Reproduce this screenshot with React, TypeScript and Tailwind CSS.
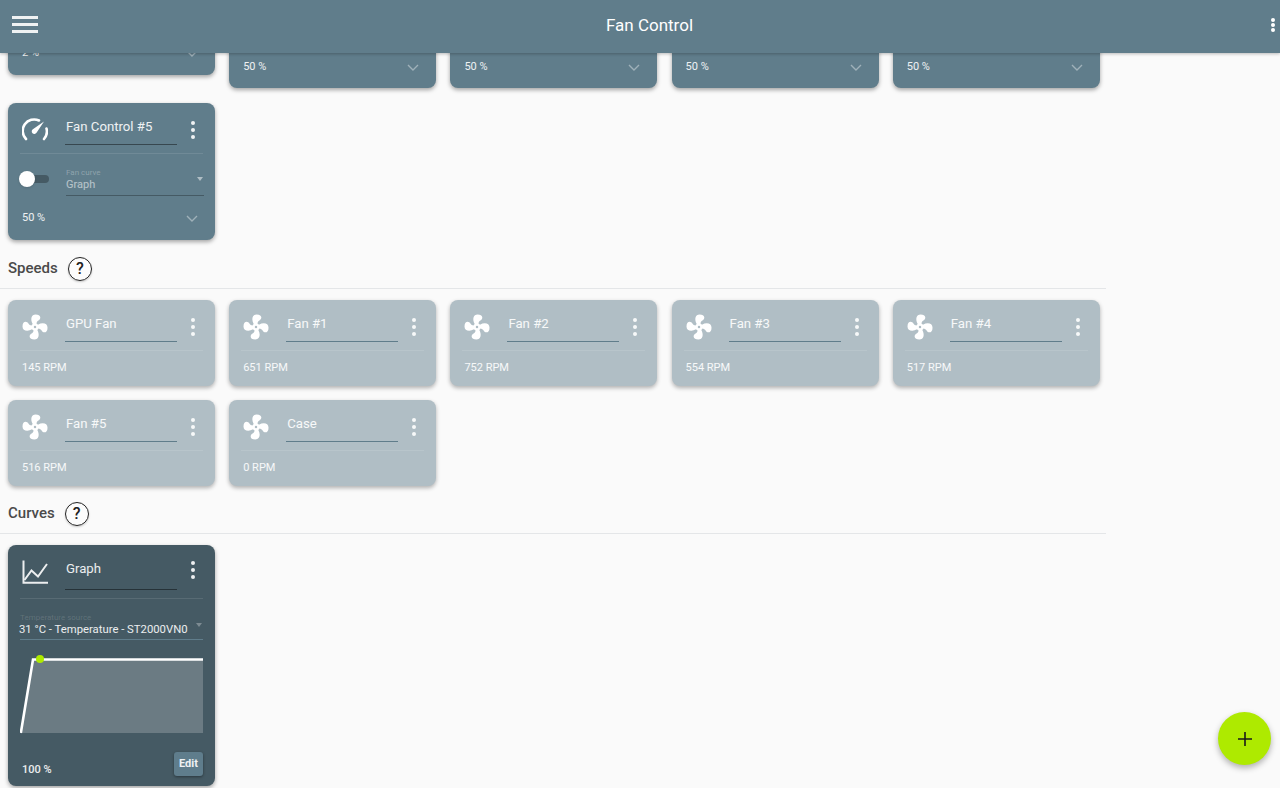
const fanPath =
  "M12,11A1,1 0 0,0 11,12A1,1 0 0,0 12,13A1,1 0 0,0 13,12A1,1 0 0,0 12,11M12.5,2C17,2 17.11,5.57 14.75,6.75C13.76,7.24 13.32,8.29 13.13,9.22C13.61,9.42 14.03,9.73 14.35,10.13C18.05,8.13 22.03,8.92 22.03,12.5C22.03,17 18.46,17.1 17.28,14.73C16.78,13.74 15.72,13.3 14.79,13.11C14.59,13.59 14.28,14 13.88,14.34C15.87,18.03 15.08,22 11.5,22C7,22 6.91,18.42 9.27,17.24C10.25,16.75 10.69,15.71 10.89,14.79C10.4,14.59 9.97,14.27 9.65,13.87C5.96,15.85 2,15.07 2,11.5C2,7 5.56,6.89 6.74,9.26C7.24,10.25 8.29,10.68 9.22,10.87C9.41,10.39 9.73,9.97 10.14,9.65C8.15,5.96 8.94,2 12.5,2Z";

function FanIcon() {
  return (
    <svg viewBox="0 0 24 24" className="w-[30px] h-[30px] text-white" fill="currentColor" fillRule="evenodd">
      <path d={fanPath} />
    </svg>
  );
}

function GaugeIcon() {
  return (
    <svg viewBox="0 0 26 24" className="w-[26px] h-[24px] text-white" fill="none" stroke="currentColor">
      <path d="M4 21A11.5 11.5 0 0 1 17 2.5" strokeWidth="2.6" strokeLinecap="round" />
      <path d="M24.5 10.5A11.5 11.5 0 0 1 22 21" strokeWidth="2.6" strokeLinecap="round" />
      <path d="M22 3.5L14.5 14.8a2.6 2.6 0 1 1-3.6-3.6z" fill="currentColor" stroke="none" />
    </svg>
  );
}

function ChartIcon() {
  return (
    <svg viewBox="0 0 26 24" className="w-[26px] h-[24px] text-white opacity-90" fill="none" stroke="currentColor" strokeWidth="2">
      <path d="M1.5 0.5V22.8H26" />
      <path d="M2.5 20L9.5 10.5L16 16.5L25 4" />
    </svg>
  );
}

function Dots() {
  return (
    <div className="flex flex-col gap-[3px] items-center w-[4px]">
      <div className="w-[4px] h-[4px] rounded-full bg-white opacity-90" />
      <div className="w-[4px] h-[4px] rounded-full bg-white opacity-90" />
      <div className="w-[4px] h-[4px] rounded-full bg-white opacity-90" />
    </div>
  );
}

function CardHead({
  icon,
  name,
  line,
  tall,
  dotsTop = "mt-[18px]",
}: {
  icon: React.ReactNode;
  name: string;
  line: string;
  tall?: boolean;
  dotsTop?: string;
}) {
  return (
    <div className={`flex mx-3 border-b border-white/10 ${tall ? "h-[54px]" : "h-[51px]"}`}>
      <div className="w-[30px] h-[40px] mt-[7px] flex items-center justify-center">{icon}</div>
      <div className={`ml-[15px] w-[112px] border-b pl-[1px] pt-[16px] text-[13.2px] leading-4 text-white/90 ${line} ${tall ? "h-[45px]" : "h-[42px]"}`}>
        {name}
      </div>
      <div className={`ml-[14px] ${dotsTop}`}>
        <Dots />
      </div>
    </div>
  );
}

function Chevron() {
  return (
    <svg viewBox="0 0 12 7" className="w-[12px] h-[7px] text-white/40" fill="none" stroke="currentColor" strokeWidth="1.4">
      <path d="M1 1l5 5 5-5" />
    </svg>
  );
}

function CardFooter({ value, tall }: { value: string; tall?: boolean }) {
  return (
    <div className={`mt-auto flex items-center justify-between pl-[14px] pr-[17px] ${tall ? "h-[42px]" : "h-[44px]"}`}>
      <span className="text-[11px] text-white/90">{value}</span>
      <Chevron />
    </div>
  );
}

// the upper part of these sits behind the app bar, only the footer shows
function ScrolledCard({ value, tall }: { value: string; tall?: boolean }) {
  return (
    <div className={`w-[207px] rounded-lg bg-[#607d8b] shadow-[0_2px_4px_rgba(0,0,0,0.35)] flex flex-col ${tall ? "h-[150px]" : "h-[137px]"}`}>
      <CardFooter value={value} tall={tall} />
    </div>
  );
}

function ControlCard({ name, value, curve = "Graph" }: { name: string; value: string; curve?: string }) {
  return (
    <div className="w-[207px] h-[137px] rounded-lg bg-[#607d8b] shadow-[0_2px_4px_rgba(0,0,0,0.35)] flex flex-col">
      <CardHead icon={<GaugeIcon />} name={name} line="border-[#37474f]" />
      <div className="flex mt-[14px] pl-3 pr-[11px]">
        <div className="relative w-[30px] h-[28px]">
          <div className="absolute left-[4px] top-[7px] w-[25px] h-[8px] rounded-full bg-[#455a64]" />
          <div className="absolute -left-[1px] top-[3px] w-[16px] h-[16px] rounded-full bg-white shadow" />
        </div>
        <div className="relative ml-[16px] flex-1 h-[28px] border-b border-[#455a64]">
          <div className="text-[8px] leading-[10px] text-white/30">Fan curve</div>
          <div className="text-[11px] leading-[14px] text-white/55">{curve}</div>
          <div className="absolute right-[1px] top-[9px] w-0 h-0 border-x-[3.5px] border-x-transparent border-t-[4px] border-t-white/50" />
        </div>
      </div>
      <CardFooter value={value} />
    </div>
  );
}

function SpeedCard({ name, rpm }: { name: string; rpm: string }) {
  return (
    <div className="w-[207px] h-[86px] rounded-lg bg-[#b0bec5] shadow-[0_2px_4px_rgba(0,0,0,0.3)]">
      <CardHead icon={<FanIcon />} name={name} line="border-[#607d8b]" />
      <div className="pl-[14px] pt-[10px] text-[11px] leading-[14px] text-white/90">{rpm}</div>
    </div>
  );
}

function SectionTitle({ title }: { title: string }) {
  return (
    <div className="flex items-center w-[1106px] h-[39px] -ml-2 pl-2 pb-[1px] border-b border-[#e4e6e8]">
      <span className="text-[15px] font-medium text-[#4a4a4a]">{title}</span>
      <div className="ml-[10px] w-[24px] h-[24px] rounded-full border-[1.5px] border-[#222] bg-white/40 shadow-[0_1px_2px_rgba(0,0,0,0.2)] flex items-center justify-center text-[16px] font-medium text-[#222]">
        ?
      </div>
    </div>
  );
}

function CurveCard() {
  return (
    <div className="w-[207px] h-[241px] rounded-lg bg-[#455a64] shadow-[0_2px_4px_rgba(0,0,0,0.35)] flex flex-col">
      <CardHead icon={<ChartIcon />} name="Graph" line="border-[#263238]" tall dotsTop="mt-[16px]" />
      <div className="relative mx-3 mt-[13px] h-[28px] border-b border-[#607d8b] whitespace-nowrap">
        <div className="text-[8px] leading-[11px] text-white/15">Temperature source</div>
        <div className="-ml-[1px] text-[11.3px] leading-[14px] text-white/90">31 °C - Temperature - ST2000VN0</div>
        <div className="absolute right-[1px] top-[11px] w-0 h-0 border-x-[3.5px] border-x-transparent border-t-[4px] border-t-white/30" />
      </div>
      <svg viewBox="0 0 184 84" className="w-[184px] h-[84px] ml-3 mt-[14px]">
        <path d="M0 79L13 5H183V79Z" fill="#6b7b83" />
        <path d="M0.8 79L13 5.5H183" fill="none" stroke="#fff" strokeWidth="2.6" />
        <circle cx="20" cy="5" r="4" fill="#aeea00" />
      </svg>
      <div className="flex mt-auto items-end justify-between pl-[14px] pr-3 pb-[9px]">
        <span className="text-[11px] leading-[14px] font-medium text-white/90">100 %</span>
        <div className="w-[29px] h-[24px] mb-[1px] pt-[1px] rounded-[3px] bg-[#5f7d8c] shadow-[0_1px_3px_rgba(0,0,0,0.4)] flex items-center justify-center text-[11px] font-bold text-white/90">
          Edit
        </div>
      </div>
    </div>
  );
}

export default function App() {
  return (
    <div className="relative h-[788px] w-[1280px] overflow-hidden bg-[#fafafa] font-['Roboto',sans-serif]">
      {/* scrolled content */}
      <div className="-mt-[62px] pl-2">
        <div className="flex gap-x-[14.2px] items-start h-[150px]">
          <ScrolledCard value="2 %" />
          <ScrolledCard value="50 %" tall />
          <ScrolledCard value="50 %" tall />
          <ScrolledCard value="50 %" tall />
          <ScrolledCard value="50 %" tall />
        </div>
        <div className="mt-[15px]">
          <ControlCard name="Fan Control #5" value="50 %" />
        </div>
        <div className="mt-[10px]">
          <SectionTitle title="Speeds" />
        </div>
        <div className="flex flex-wrap gap-x-[14.2px] gap-y-[14px] mt-[11px] w-[1100px]">
          <SpeedCard name="GPU Fan" rpm="145 RPM" />
          <SpeedCard name="Fan #1" rpm="651 RPM" />
          <SpeedCard name="Fan #2" rpm="752 RPM" />
          <SpeedCard name="Fan #3" rpm="554 RPM" />
          <SpeedCard name="Fan #4" rpm="517 RPM" />
          <SpeedCard name="Fan #5" rpm="516 RPM" />
          <SpeedCard name="Case" rpm="0 RPM" />
        </div>
        <div className="mt-[9px]">
          <SectionTitle title="Curves" />
        </div>
        <div className="mt-[11px]">
          <CurveCard />
        </div>
      </div>

      {/* app bar */}
      <div className="absolute top-0 left-0 right-0 h-[53px] bg-[#607d8b] shadow-[0_1px_3px_rgba(0,0,0,0.25)] flex items-center justify-center">
        <div className="absolute left-[12px] top-[16px] flex flex-col gap-[4px]">
          <div className="w-[26px] h-[3px] bg-white/90" />
          <div className="w-[26px] h-[3px] bg-white/90" />
          <div className="w-[26px] h-[3px] bg-white/90" />
        </div>
        <span className="ml-[19px] -mt-[2px] text-[17px] text-white">Fan Control</span>
        <div className="absolute right-[5px] top-[18px]">
          <div className="flex flex-col gap-[1px]">
            <div className="w-[4px] h-[4px] rounded-full bg-white" />
            <div className="w-[4px] h-[4px] rounded-full bg-white" />
            <div className="w-[4px] h-[4px] rounded-full bg-white" />
          </div>
        </div>
      </div>

      {/* add button */}
      <div className="absolute left-[1218px] top-[712px] w-[53px] h-[53px] rounded-full bg-[#aeea00] shadow-[0_3px_6px_rgba(0,0,0,0.3)] flex items-center justify-center">
        <svg viewBox="0 0 14 14" className="w-[14px] h-[14px]" fill="none" stroke="#1a1a1a" strokeWidth="1.6">
          <path d="M7 0V14M0 7H14" />
        </svg>
      </div>
    </div>
  );
}
